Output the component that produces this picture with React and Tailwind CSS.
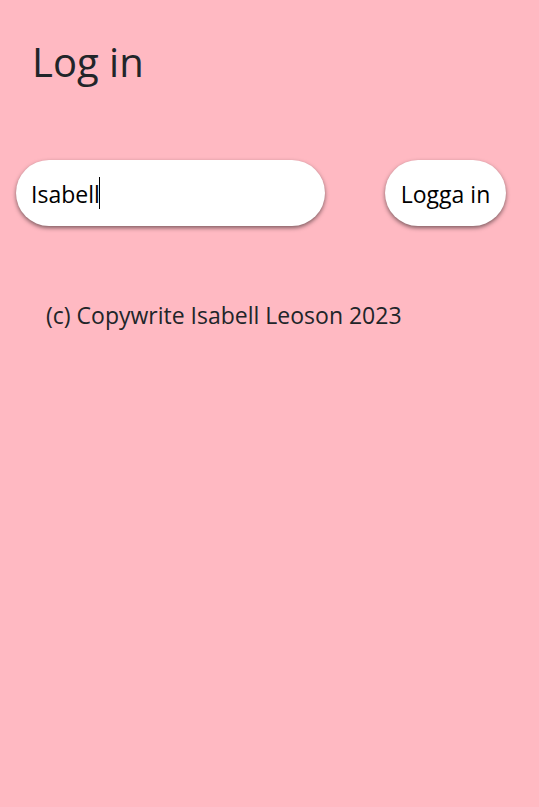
export default function App() {
  return (
    <div className="min-h-screen bg-[#ffb9c2] px-4 pt-[38px] font-['Open_Sans','Noto_Sans',sans-serif] text-[#212529]">
      <h1 className="px-4 text-[40px] leading-[48px]">Log in</h1>
      <form className="mt-[74px] flex items-center gap-[60px]" onSubmit={(e) => e.preventDefault()}>
        <div className="relative w-[309px] min-w-0">
          <input
            type="text"
            aria-label="Username"
            defaultValue="Isabell"
            autoFocus
            className="block h-[66px] w-full rounded-full bg-white px-[15px] pt-0.5 text-[23px] text-black caret-transparent shadow-[0_2px_4px_rgba(0,0,0,0.5)] outline-none"
          />
          <span aria-hidden="true" className="absolute top-[17px] left-[83px] h-8 w-px bg-black" />
        </div>
        <button
          type="submit"
          className="h-[66px] w-[121px] shrink-0 rounded-full bg-white pt-0.5 text-[23px] text-black shadow-[0_2px_4px_rgba(0,0,0,0.5)]"
        >
          Logga in
        </button>
      </form>
      <footer className="mt-[71px] px-[30px] text-[23px] leading-9">(c) Copywrite Isabell Leoson 2023</footer>
    </div>
  );
}
